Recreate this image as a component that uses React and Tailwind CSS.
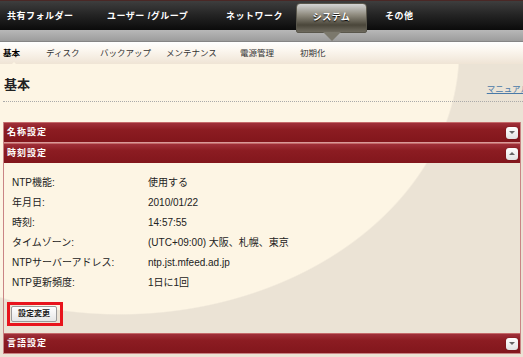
import React from 'react'

const topNav = [
  { label: '共有フォルダー', w: 'w-[100px]' },
  { label: 'ユーザー /グループ', w: 'w-[119px]' },
  { label: 'ネットワーク', w: 'w-[70px]' },
]

const subNav = [
  { label: '基本', w: 'w-[43px]', active: true },
  { label: 'ディスク', w: 'w-[54px]' },
  { label: 'バックアップ', w: 'w-[66px]' },
  { label: 'メンテナンス', w: 'w-[74px]' },
  { label: '電源管理', w: 'w-[60px]' },
  { label: '初期化', w: 'w-[60px]' },
]

const rows = [
  ['NTP機能:', '使用する'],
  ['年月日:', '2010/01/22'],
  ['時刻:', '14:57:55'],
  ['タイムゾーン:', '(UTC+09:00) 大阪、札幌、東京'],
  ['NTPサーバーアドレス:', 'ntp.jst.mfeed.ad.jp'],
  ['NTP更新頻度:', '1日に1回'],
]

function SectionBar({ title, open }) {
  return (
    <div className="flex h-[20px] items-center justify-between border-t border-[#c46a6a] bg-[linear-gradient(#a0303a,#8c1c22_35%,#82161c)] pl-[3px] pr-[2px]">
      <span className="text-[9px] font-bold tracking-[1px] text-white">{title}</span>
      <span className="flex h-[12px] w-[12px] items-center justify-center rounded-[3px] bg-[linear-gradient(#ffffff,#e2e2e2)] shadow-[0_0_1px_rgba(0,0,0,0.6)]">
        {open ? (
          <span className="h-0 w-0 border-x-[3px] border-b-[3px] border-x-transparent border-b-[#666]" />
        ) : (
          <span className="h-0 w-0 border-x-[3px] border-t-[3px] border-x-transparent border-t-[#666]" />
        )}
      </span>
    </div>
  )
}

export default function App() {
  return (
    <div className="relative flex h-[357px] w-[523px] flex-col overflow-hidden bg-[image:radial-gradient(ellipse_340px_265px_at_120px_50px,#fdf5e4_99.5%,#ebe3d5_100%)] font-['Liberation_Sans','Noto_Sans_CJK_JP',sans-serif] text-[#222]">
      {/* Top nav */}
      <div className="relative z-10 flex h-[30px] shrink-0 items-start border-t border-[#4a2826] bg-[linear-gradient(#3e3e3e,#232323_50%,#0b0b0b)] pl-[7px]">
        {topNav.map((item) => (
          <span key={item.label} className={`${item.w} pt-[9px] text-[9px] font-bold tracking-[0.5px] text-white`}>
            {item.label}
          </span>
        ))}
        <div className="relative mt-[2px] flex h-[30px] w-[71px] items-center justify-center rounded-t-[4px] rounded-b-[2px] border border-[#5a574c] bg-[linear-gradient(#d4d4d4,#8d897c_40%,#4a463a_75%,#6f6b5f)]">
          <span className="text-[9px] font-bold tracking-[0.5px] text-white [text-shadow:0_1px_1px_#000]">システム</span>
          <span className="absolute left-1/2 top-full h-0 w-0 -translate-x-1/2 border-x-[9px] border-t-[9px] border-x-transparent border-t-[#7b786c]" />
        </div>
        <span className="ml-[18px] pt-[9px] text-[9px] font-bold tracking-[0.5px] text-white">その他</span>
      </div>

      {/* Grey strip */}
      <div className="h-[12px] shrink-0 border-b border-[#858585] bg-[linear-gradient(#b8b8b8,#9c9c9c)]" />

      {/* Sub nav */}
      <div className="flex h-[22px] shrink-0 items-center bg-[linear-gradient(#ffffff,#fbf6ee_40%,#efe4d5)] pl-[3px]">
        {subNav.map((item) => (
          <span
            key={item.label}
            className={`relative ${item.w} text-[8.5px] ${item.active ? 'font-bold text-black' : 'text-[#333]'}`}
          >
            {item.label}
            {item.active && (
              <span className="absolute left-[5px] top-[15px] h-0 w-0 border-x-[6px] border-b-[6px] border-x-transparent border-b-[#fdf5e4]" />
            )}
          </span>
        ))}
      </div>

      {/* Content */}
      <div className="flex flex-col pl-[3px]">
        <div className="flex h-[38px] items-center justify-between border-b border-dotted border-[#aaa]">
          <span className="pl-[1px] pt-[4px] text-[13px] font-bold text-[#222]">基本</span>
          <a className="mr-[-6px] pt-[14px] text-[8.5px] whitespace-nowrap text-[#4a7aa8] underline">マニュアル</a>
        </div>

        <div className="mt-[20px] mr-[2px] border-x border-b border-[#c98484]">
          <SectionBar title="名称設定" />
          <div className="border-t border-[#d99a9a]">
            <SectionBar title="時刻設定" open />
          </div>
          <div className="flex flex-col pt-[9px] pb-[7px]">
            <div className="grid grid-cols-[136px_1fr] pl-[8px] text-[10px]">
              {rows.map(([label, value]) => (
                <React.Fragment key={label}>
                  <span className="flex h-[20px] items-center">{label}</span>
                  <span className="flex h-[20px] items-center">{value}</span>
                </React.Fragment>
              ))}
            </div>
            <div className="ml-[3px] mt-[10px] w-[56px] border-[3px] border-[#e8141c] p-[1px]">
              <button className="flex h-[16px] w-[46px] items-center justify-center rounded-[2px] border border-[#9a9a9a] bg-[linear-gradient(#ffffff,#e6e6e6)] text-[8px] font-bold text-[#222]">
                設定変更
              </button>
            </div>
          </div>
          <SectionBar title="言語設定" />
        </div>
      </div>
    </div>
  )
}
